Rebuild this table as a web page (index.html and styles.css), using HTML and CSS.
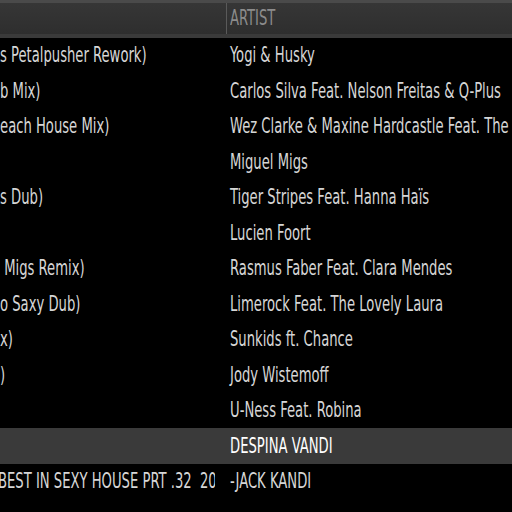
FILE: index.html
```html
<!DOCTYPE html>
<html>
<head>
<meta charset="utf-8">
<link rel="stylesheet" href="styles.css">
</head>
<body>
<div class="list">
  <div class="header">
    <div class="cell title"></div>
    <div class="cell artist"><span class="txt">ARTIST</span></div>
  </div>
  <div class="row">
    <div class="cell title"><span class="txt">s Petalpusher Rework)</span></div>
    <div class="cell artist"><span class="txt">Yogi &amp; Husky</span></div>
  </div>
  <div class="row">
    <div class="cell title"><span class="txt">b Mix)</span></div>
    <div class="cell artist"><span class="txt">Carlos Silva Feat. Nelson Freitas &amp; Q-Plus</span></div>
  </div>
  <div class="row">
    <div class="cell title"><span class="txt shift">Beach House Mix)</span></div>
    <div class="cell artist"><span class="txt">Wez Clarke &amp; Maxine Hardcastle Feat. The</span></div>
  </div>
  <div class="row">
    <div class="cell title"></div>
    <div class="cell artist"><span class="txt">Miguel Migs</span></div>
  </div>
  <div class="row">
    <div class="cell title"><span class="txt">s Dub)</span></div>
    <div class="cell artist"><span class="txt">Tiger Stripes Feat. Hanna Haïs</span></div>
  </div>
  <div class="row">
    <div class="cell title"></div>
    <div class="cell artist"><span class="txt">Lucien Foort</span></div>
  </div>
  <div class="row">
    <div class="cell title"><span class="txt">&#160;Migs Remix)</span></div>
    <div class="cell artist"><span class="txt">Rasmus Faber Feat. Clara Mendes</span></div>
  </div>
  <div class="row">
    <div class="cell title"><span class="txt">o Saxy Dub)</span></div>
    <div class="cell artist"><span class="txt">Limerock Feat. The Lovely Laura</span></div>
  </div>
  <div class="row">
    <div class="cell title"><span class="txt">x)</span></div>
    <div class="cell artist"><span class="txt">Sunkids ft. Chance</span></div>
  </div>
  <div class="row">
    <div class="cell title"><span class="txt">)</span></div>
    <div class="cell artist"><span class="txt">Jody Wistemoff</span></div>
  </div>
  <div class="row">
    <div class="cell title"></div>
    <div class="cell artist"><span class="txt">U-Ness Feat. Robina</span></div>
  </div>
  <div class="row selected">
    <div class="cell title"></div>
    <div class="cell artist"><span class="txt">DESPINA VANDI</span></div>
  </div>
  <div class="row">
    <div class="cell title"><span class="txt shift2">BEST IN SEXY HOUSE PRT .32&#160;&#160;2010</span></div>
    <div class="cell artist"><span class="txt">-JACK KANDI</span></div>
  </div>
</div>
</body>
</html>
```
FILE: styles.css
```css
html, body {
  margin: 0;
  padding: 0;
  background: #000;
  width: 512px;
  height: 512px;
  overflow: hidden;
}

.list {
  font-family: "DejaVu Sans Condensed", "DejaVu Sans", sans-serif;
  font-size: 22px;
  color: #d6d6d6;
}

.header {
  display: flex;
  height: 37.5px;
  box-sizing: border-box;
  border-top: 3px solid #4a4a4a;
  border-bottom: 4px solid #3a3a3a;
  background: linear-gradient(#363636, #2e2e2e);
  color: #8c8c8c;
}

.header .artist {
  border-left: 1px solid #5a5a5a;
  padding-left: 3px;
}

.row {
  display: flex;
  height: 35.5px;
}

.row .artist {
  border-left: 1px solid transparent;
  padding-left: 3px;
}

.selected {
  background: #3a3a3a;
  color: #fff;
}

.cell {
  display: flex;
  align-items: center;
  overflow: hidden;
  white-space: nowrap;
  box-sizing: border-box;
}

.title {
  width: 215px;
  flex: none;
  margin-right: 11px;
}

.artist {
  flex: 1;
  min-width: 0;
}

.txt {
  display: inline-block;
  transform: scaleX(0.665);
  transform-origin: 0 50%;
  line-height: 1;
}

.shift {
  margin-left: -9px;
}

.shift2 {
  margin-left: -2px;
}
```
